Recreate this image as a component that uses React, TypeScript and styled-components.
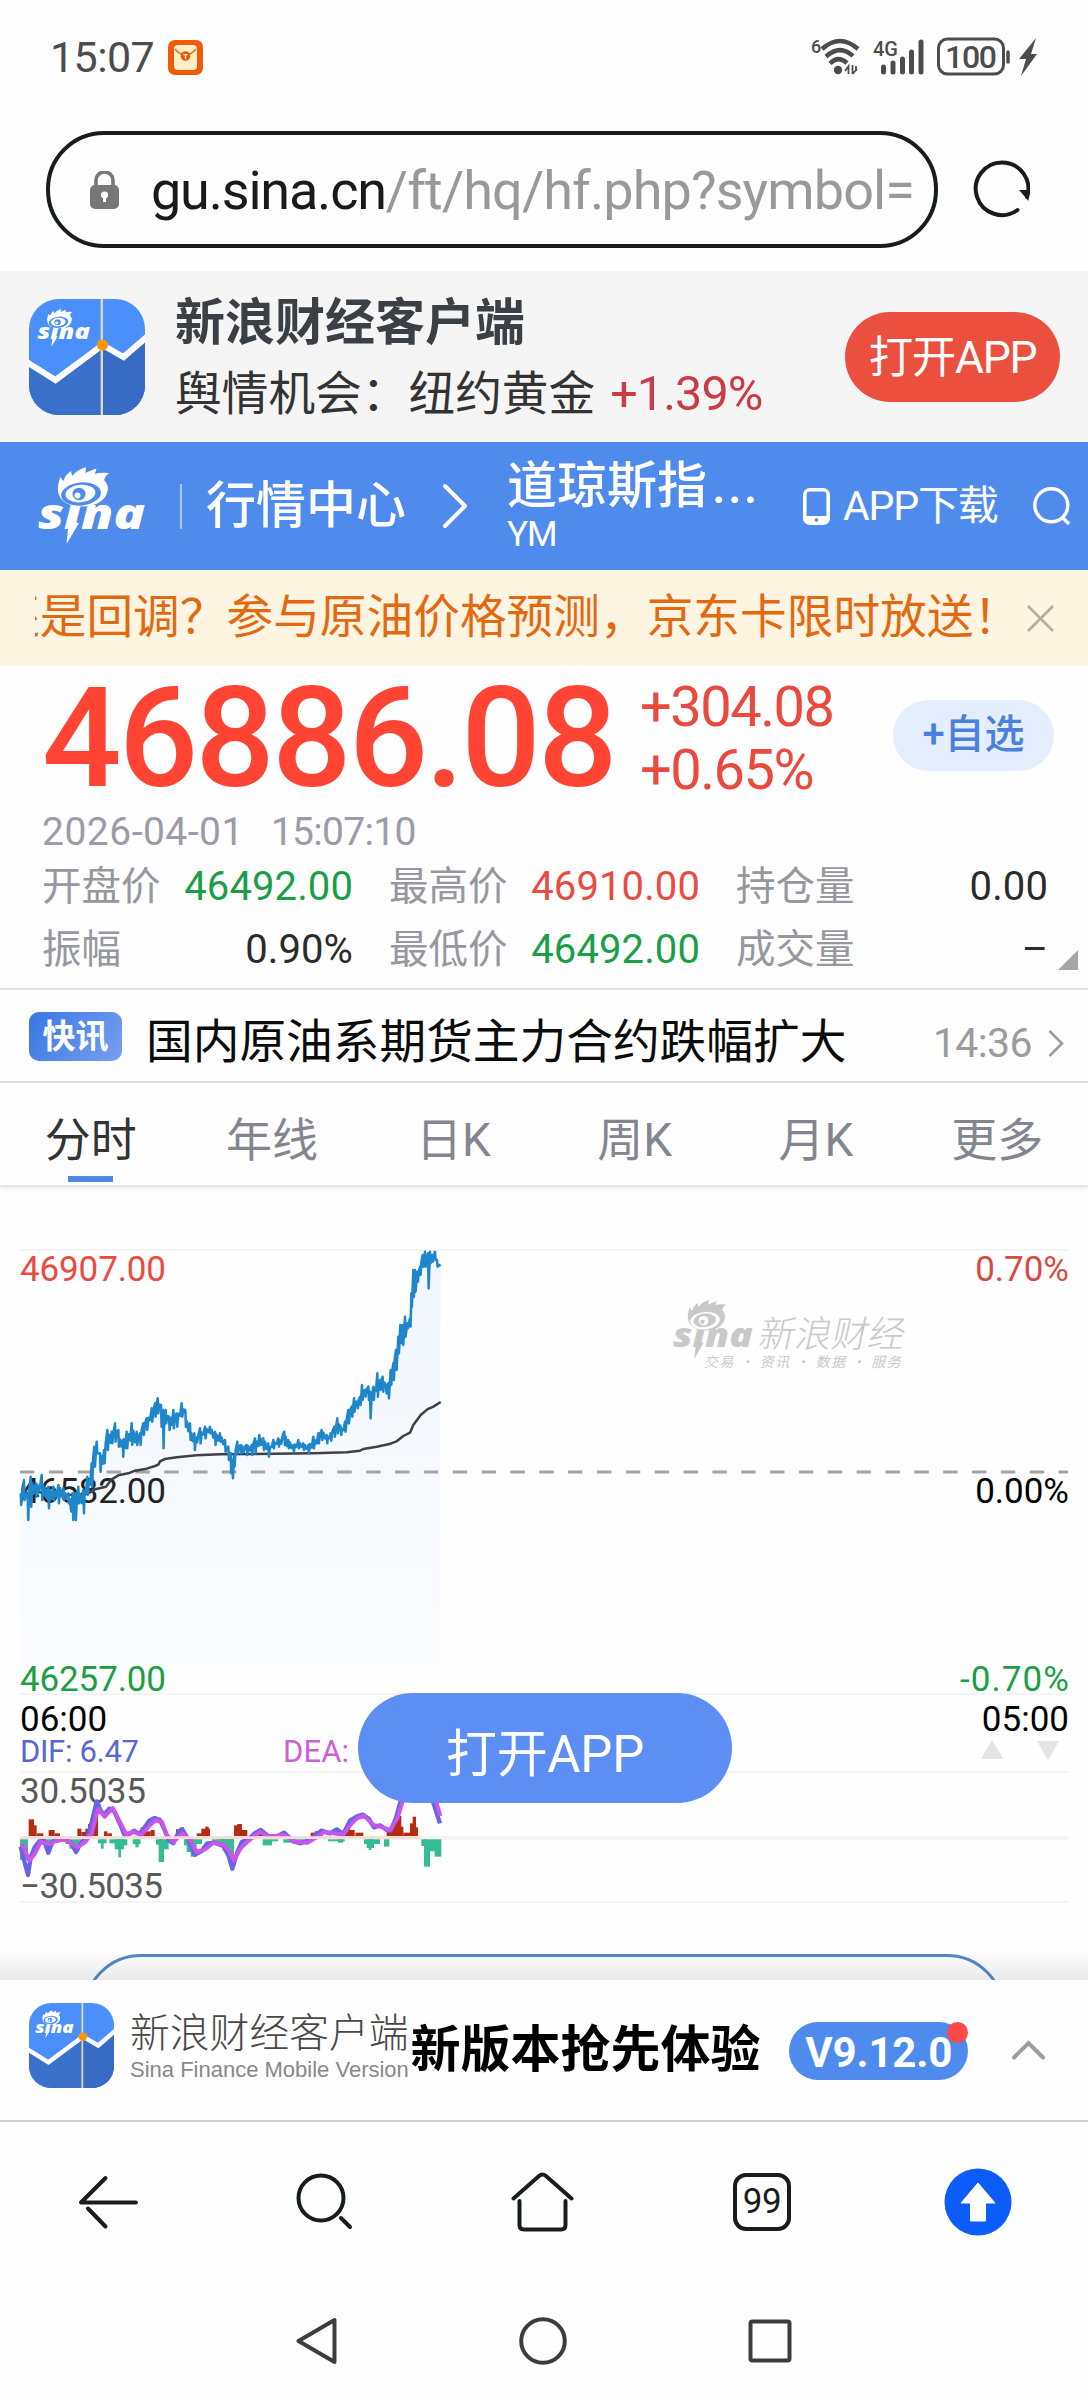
import React from "react";
import styled, { createGlobalStyle } from "styled-components";

const FONT = `Roboto, "Noto Sans CJK SC", sans-serif`;
const RED = "#e94b40";
const GREEN = "#1a9f46";

const GlobalStyle = createGlobalStyle`
  *, *::before, *::after { box-sizing: border-box; }
  body { margin: 0; background: #fefefe; font-family: ${FONT}; line-height: 1; }
  svg { display: block; flex: none; }
`;

const Screen = styled.div`
  width: 1088px;
  height: 2400px;
  display: flex;
  flex-direction: column;
  overflow: hidden;
  background: #fefefe;
  white-space: nowrap;
`;

/* ---------- status bar ---------- */
const StatusBar = styled.header`
  height: 131px;
  padding: 33px 50px 0 50px;
  display: flex;
  justify-content: space-between;
  align-items: flex-start;
  color: #4c4c4c;
`;
const StatusGroup = styled.div<{ $gap: number }>`
  display: flex;
  align-items: center;
  height: 48px;
  gap: ${(p) => p.$gap}px;
`;
const Clock = styled.span`
  font-size: 43px;
  letter-spacing: -0.6px;
`;

/* ---------- address bar ---------- */
const AddressRow = styled.div`
  height: 140px;
  padding: 0 58px 0 46px;
  display: flex;
  align-items: flex-start;
  justify-content: space-between;
`;
const AddressField = styled.div`
  width: 892px;
  height: 117px;
  border: 4px solid #1a1c1c;
  border-radius: 58px;
  padding: 0 18px 0 40px;
  display: flex;
  align-items: center;
`;
const Url = styled.div`
  flex: 1;
  margin-left: 32px;
  padding-top: 2px;
  font-size: 54px;
  line-height: 70px;
  letter-spacing: -0.9px;
  overflow: hidden;
  color: #999;
`;
const Host = styled.span`
  color: #1a1a1a;
  letter-spacing: -1.2px;
`;
const ReloadBox = styled.div`
  height: 117px;
  display: flex;
  align-items: center;
`;

/* ---------- promo banner ---------- */
const Promo = styled.section`
  height: 171px;
  background: #f5f5f5;
  padding: 0 28px 0 29px;
  display: flex;
  align-items: center;
`;
const PromoText = styled.div`
  flex: 1;
  margin-left: 30px;
  padding-top: 4px;
  display: flex;
  flex-direction: column;
  gap: 22px;
`;
const PromoTitle = styled.h1`
  margin: 0;
  font-size: 50px;
  font-weight: 700;
  color: #3b4046;
`;
const PromoLine = styled.div`
  font-size: 46.7px;
  color: #333;
`;
const PromoGain = styled.span`
  margin-left: 15px;
  font-size: 48.5px;
  letter-spacing: -0.9px;
  color: #cc3b45;
`;
const PromoButton = styled.button`
  width: 215px;
  height: 90px;
  border: 0;
  padding: 0 0 7px;
  border-radius: 45px;
  background: #eb4f3d;
  color: #fff;
  font: 400 44.5px ${FONT};
  letter-spacing: -1.3px;
`;

/* ---------- site header ---------- */
const SiteHeader = styled.nav`
  height: 128px;
  background: #4f8bed;
  color: #fff;
  padding: 0 16px 0 38px;
  display: flex;
  align-items: center;
`;
const HeaderDivider = styled.i`
  width: 2px;
  height: 45px;
  margin: 0 24px 0 34px;
  background: #a9c6f7;
`;
const HeaderSection = styled.span`
  font-size: 50px;
  font-weight: 500;
  margin-right: 36px;
`;
const HeaderTitle = styled.div`
  width: 296px;
  margin-left: 39px;
  display: flex;
  flex-direction: column;
  gap: 6px;
`;
const IndexName = styled.strong`
  font-size: 50px;
  font-weight: 500;
`;
const Dots = styled.span`
  letter-spacing: 2px;
  margin-left: 5px;
`;
const Symbol = styled.span`
  font-size: 35px;
  letter-spacing: -1px;
`;
const Download = styled.span`
  font-size: 41px;
  margin: 0 36px 0 13px;
  letter-spacing: -1.2px;
`;

/* ---------- scrolling notice ---------- */
const Notice = styled.section`
  height: 96px;
  background: #fef4e2;
  padding: 0 34px 0 35px;
  display: flex;
  align-items: center;
  justify-content: space-between;
`;
const NoticeText = styled.div`
  width: 962px;
  overflow: hidden;
  text-indent: -42px;
  font-size: 46.7px;
  line-height: 64px;
  padding-bottom: 2px;
  color: #e2690f;
`;

/* ---------- quote ---------- */
const Quote = styled.section`
  height: 324px;
  padding: 0 34px 0 42px;
  border-bottom: 2px solid #e2e2e2;
`;
const PriceRow = styled.div`
  height: 142px;
  padding-top: 2px;
  display: flex;
  align-items: center;
`;
const Price = styled.div`
  width: 598px;
  font-size: 140px;
  font-weight: 500;
  letter-spacing: -2.9px;
  color: #ff4433;
`;
const Change = styled.div`
  width: 253px;
  display: flex;
  flex-direction: column;
  gap: 7px;
  font-size: 56px;
  letter-spacing: -1.5px;
  color: #ea4a3e;
`;
const AddButton = styled.button`
  width: 161px;
  height: 71px;
  margin-bottom: 5px;
  border: 0;
  padding: 0 0 9px;
  border-radius: 36px;
  background: #e5eefc;
  color: #4b80dc;
  font: 500 40px ${FONT};
`;
const Stamp = styled.div`
  display: flex;
  gap: 27px;
  height: 44px;
  margin-top: 2px;
  font-size: 39px;
  line-height: 44px;
  color: #9b9ca6;
`;
const StampPart = styled.span<{ $spacing: number }>`
  letter-spacing: ${(p) => p.$spacing}px;
`;
const Stats = styled.dl`
  margin: 0;
  display: grid;
  grid-template-columns: 311px 311px 312px;
  grid-auto-rows: 63px;
  column-gap: 36px;
`;
const Stat = styled.div`
  display: flex;
  align-items: center;
  justify-content: space-between;
`;
const StatName = styled.dt`
  font-size: 39.5px;
  color: #96979f;
`;
const StatValue = styled.dd<{ $tone?: string }>`
  margin: 0;
  font-size: 40px;
  letter-spacing: 0.1px;
  color: ${(p) => p.$tone ?? "#2b2b2b"};
`;
const StatsWrap = styled.div`
  position: relative;
  width: 1006px;
  margin-top: 1px;
`;
const ExpandMark = styled.svg`
  position: absolute;
  right: -30px;
  bottom: 11px;
`;

/* ---------- news ---------- */
const News = styled.section`
  height: 93px;
  border-bottom: 2px solid #e2e2e2;
  padding: 10px 24px 0 29px;
  display: flex;
  align-items: center;
`;
const NewsBadge = styled.span`
  width: 93px;
  height: 49px;
  margin-bottom: 9px;
  border-radius: 10px;
  background: linear-gradient(125deg, #3877e3, #7a9ff0);
  color: #fff;
  font-size: 33px;
  font-weight: 700;
  display: flex;
  align-items: center;
  justify-content: center;
`;
const NewsTitle = styled.span`
  flex: 1;
  margin-left: 24px;
  padding-top: 4px;
  font-size: 46.7px;
  color: #0b0b0b;
`;
const NewsTime = styled.time`
  margin-right: 16px;
  padding-top: 6px;
  font-size: 41px;
  letter-spacing: -0.6px;
  color: #9c9c9c;
`;
const NewsArrow = styled.svg`
  margin-top: 6px;
`;

/* ---------- tabs ---------- */
const Tabs = styled.div`
  height: 104px;
  display: grid;
  grid-template-columns: repeat(6, 1fr);
  border-bottom: 2px solid #e6e6e6;
  box-shadow: 0 1px 4px rgba(0, 0, 0, 0.1);
`;
const Tab = styled.div<{ $active?: boolean }>`
  display: flex;
  flex-direction: column;
  align-items: center;
  padding-top: 34px;
  font-size: 46px;
  color: ${(p) => (p.$active ? "#333" : "#84868f")};
  &::after {
    content: "";
    width: 45px;
    height: 6px;
    margin-top: 13px;
    background: ${(p) => (p.$active ? "#4f87e4" : "transparent")};
  }
`;

/* ---------- chart ---------- */
const ChartArea = styled.main`
  position: relative;
  height: 793px;
  overflow: hidden;
  display: flex;
  flex-direction: column;
`;
const Plot = styled.svg`
  font-family: ${FONT};
  font-size: 35px;
`;
const OpenApp = styled.button`
  position: absolute;
  left: 358px;
  top: 506px;
  width: 374px;
  height: 110px;
  border: 0;
  padding: 4px 0 0;
  border-radius: 55px;
  background: #5c8ef3;
  color: #fff;
  font: 400 51px ${FONT};
  letter-spacing: -0.3px;
`;
const MorePill = styled.div`
  flex: none;
  width: 922px;
  height: 116px;
  margin: 0 auto;
  border: 3px solid #5689c9;
  border-radius: 58px;
`;
const FootShade = styled.div`
  position: absolute;
  left: 0;
  right: 0;
  bottom: 0;
  height: 32px;
  background: linear-gradient(rgba(0, 0, 0, 0), rgba(0, 0, 0, 0.08));
`;

/* ---------- app promo footer ---------- */
const Footer = styled.footer`
  height: 142px;
  background: #fefefe;
  border-bottom: 2px solid #ccd1d1;
  padding: 0 43px 10px 29px;
  display: flex;
  align-items: center;
`;
const FooterBrand = styled.div`
  width: 281px;
  margin-left: 16px;
  display: flex;
  flex-direction: column;
  gap: 7px;
`;
const BrandName = styled.span`
  font-family: "Noto Sans CJK SC", sans-serif;
  font-size: 39.8px;
  line-height: 42px;
  font-weight: 300;
  color: #484848;
`;
const BrandSub = styled.span`
  font: 400 22px/24px "Liberation Sans", sans-serif;
  letter-spacing: 0;
  color: #888;
`;
const FooterLead = styled.strong`
  font-size: 50px;
  font-weight: 700;
  color: #000;
  padding-top: 10px;
`;
const Version = styled.span`
  position: relative;
  width: 179px;
  height: 58px;
  margin: 11px 44px 0 29px;
  border-radius: 29px;
  background: #4f8bed;
  color: #fff;
  font-size: 42px;
  font-weight: 700;
  letter-spacing: -0.2px;
  display: flex;
  align-items: center;
  justify-content: center;
  padding-top: 4px;
  &::after {
    content: "";
    position: absolute;
    right: 0;
    top: 0;
    width: 21px;
    height: 21px;
    border-radius: 50%;
    background: #ff4848;
  }
`;
const Caret = styled.svg`
  margin-top: 10px;
`;

/* ---------- browser and system bars ---------- */
const BrowserBar = styled.nav`
  height: 160px;
  padding: 0 76px 0 78px;
  display: flex;
  align-items: center;
  justify-content: space-between;
`;
const TabCount = styled.span`
  width: 58px;
  height: 58px;
  margin: 0 -3px 0 3px;
  border: 4px solid #1a1c1c;
  border-radius: 13px;
  font-size: 35px;
  color: #1a1c1c;
  letter-spacing: -0.5px;
  display: flex;
  align-items: center;
  justify-content: center;
  padding-bottom: 2px;
`;
const SystemBar = styled.nav`
  height: 118px;
  padding: 0 296px;
  display: flex;
  align-items: center;
  justify-content: space-between;
`;

/* ---------- logo drawings ---------- */
function SinaMark({ ink, hole }: { ink: string; hole: string }) {
  return (
    <g>
      <text
        x="0"
        y="62"
        fill={ink}
        fontFamily='"Open Sans", sans-serif'
        fontSize="43"
        fontWeight="800"
        fontStyle="italic"
        textLength="107"
        lengthAdjust="spacingAndGlyphs"
      >
        sina
      </text>
      <path d="M31 54 L28.500 77 L41 56 Z" fill={ink} />
      <path
        d="M21.500 29 C18 21 21 16 22 10 L25.500 14 Q27 8 33 4 L34 9 Q39 3 48 0 L47.500 6 Q53 3 58.500 1.500 L57 7 Q62 5 71 6 Q67 9 66 13 Q72 19 69 26 C66 35 56 39.500 44 39.500 C34 39.500 24 36 21.500 29 Z"
        fill={ink}
      />
      <ellipse cx="43" cy="27" rx="20" ry="11.500" fill={hole} transform="rotate(-6 43 27)" />
      <ellipse cx="42.500" cy="26.500" rx="15" ry="8.800" fill={ink} transform="rotate(-6 43 27)" />
      <ellipse cx="41" cy="27" rx="6.500" ry="6.200" fill={hole} />
      <circle cx="39.500" cy="28.500" r="3" fill={ink} />
    </g>
  );
}

function AppIcon({ size, id }: { size: number; id: string }) {
  return (
    <svg width={size} height={size} viewBox="0 0 116 116">
      <defs>
        <clipPath id={id}>
          <rect width="116" height="116" rx="30" />
        </clipPath>
      </defs>
      <g clipPath={`url(#${id})`}>
        <rect width="116" height="116" fill="#4b8ffb" />
        <path d="M0 64 L26.5 81 L73.5 45 L94 58 L116 38 V116 H0Z" fill="#3a70c9" />
        <path d="M74 45 L94 58 L116 38 V116 H74Z" fill="#376bc6" />
        <path d="M-4 62 L26.5 81 L73.5 46 L94.5 58 L120 36" fill="none" stroke="#fff" strokeWidth="6" />
        <path d="M72.8 0 V116" stroke="#ddd9b4" strokeWidth="2.4" />
        <circle cx="73.5" cy="46" r="5.6" fill="#ff9500" />
        <g transform="translate(8.5 10) scale(.49)">
          <SinaMark ink="#fff" hole="#4b8ffb" />
        </g>
      </g>
    </svg>
  );
}

/* ---------- chart data ---------- */
// Each entry is x, upper bound, lower bound of the price within that moment.
const RANGE = `62 880 915;72 840 900;83 880 960;92 830 920;108 850 890;125 825 900;145 860 925;160 860 900;175 855 910;190 865 900;205 880 910;218 880 960;226 880 960;235 860 910;250 870 940;262 830 885;275 790 860;283 740 800;290 725 760;300 760 815;312 750 790;322 690 750;335 695 730;345 670 725;355 690 740;368 720 770;380 695 745;395 670 735;410 695 735;420 700 735;430 670 705;440 655 690;455 625 665;465 610 650;473 595 640;483 615 680;489 630 745;497 630 670;507 650 690;520 630 685;530 640 680;545 610 650;556 630 680;570 670 720;583 700 750;600 685 730;615 680 715;630 680 700;645 695 735;660 700 725;675 720 755;685 740 780;692 760 820;697 780 835;702 765 800;712 725 760;722 735 760;740 735 765;755 735 765;765 715 760;778 705 735;790 715 750;805 730 770;820 720 745;835 715 740;853 695 735;865 720 745;880 735 755;895 720 745;910 730 750;925 735 760;940 710 745;955 700 730;965 690 720;980 705 730;992 700 722;1003 680 710;1012 655 700;1022 680 705;1035 665 695;1045 630 670;1055 620 650;1062 595 635;1072 605 625;1080 590 615;1086 555 600;1095 570 590;1105 560 600;1110 575 655;1120 560 600;1132 520 590;1140 540 570;1148 530 575;1158 555 580;1165 550 595;1172 510 555;1180 490 540;1188 450 510;1195 410 460;1201 375 430;1208 375 435;1215 350 410;1222 370 385;1230 355 380;1234 280 320;1240 210 290;1245 210 275;1252 215 245;1260 200 225;1268 165 200;1275 155 200;1284 160 265;1290 155 190;1297 165 185;1305 155 180;1311 180 200;1322 195 205`
  .split(";")
  .map((s) => s.split(" ").map(Number));

function pricePoints(): string {
  const out: string[] = [];
  let seed = 7;
  const rnd = () => {
    seed = (seed * 16807) % 2147483647;
    return seed / 2147483647;
  };
  for (let i = 0; i < RANGE.length - 1; i++) {
    const [x0, h0, l0] = RANGE[i];
    const [x1, h1, l1] = RANGE[i + 1];
    out.push(`${x0},${h0}`, `${x0 + 1.8},${l0}`);
    const n = Math.floor((x1 - x0) / 4);
    for (let k = 1; k < n; k++) {
      const t = k / n;
      const hi = h0 + (h1 - h0) * t;
      const lo = l0 + (l1 - l0) * t;
      const y = k % 2 ? hi + (lo - hi) * (0.1 + 0.35 * rnd()) : lo - (lo - hi) * (0.1 + 0.35 * rnd());
      out.push(`${(x0 + (x1 - x0) * t).toFixed(1)},${y.toFixed(1)}`);
    }
  }
  out.push("1322,198");
  return out.join(" ");
}
const PRICE = pricePoints();

const AVERAGE =
  "62,910 75,880 100,875 150,880 200,885 262,882 285,868 318,860 335,838 355,826 385,820 405,812 440,806 465,798 475,794 480,784 495,777 530,772 590,766 660,763 760,762 940,760 1040,757 1080,752 1090,747 1130,740 1165,733 1190,724 1210,708 1230,698 1240,675 1262,645 1282,628 1300,620 1322,606";

// MACD histogram: x, width, signed height.
const BARS: number[][] = [
  [60, 24, -62], [86, 16, 50], [102, 8, 32], [110, 20, 8], [132, 22, -26], [146, 18, 18], [164, 16, 8],
  [196, 14, -14], [208, 14, -28], [222, 16, -36], [238, 10, -14], [232, 12, 22], [244, 14, 12], [256, 10, 22], [264, 8, 36], [272, 8, 54], [280, 14, 76],
  [294, 26, -12], [303, 8, -28], [312, 10, 14], [322, 14, 8], [328, 40, -12], [344, 28, -30], [355, 8, -54], [364, 18, -18],
  [398, 24, -14], [406, 10, -24], [422, 16, 26], [438, 14, 14], [452, 12, 18], [468, 24, -16], [476, 16, -68], [492, 14, -30], [506, 20, -12],
  [528, 12, 20], [540, 12, 26], [552, 14, -18], [560, 24, -38], [572, 18, -52], [588, 18, -14], [590, 16, 8], [604, 26, 22], [616, 10, 28],
  [636, 66, -12], [652, 46, -20], [668, 30, -34], [684, 18, -66], [702, 14, 32], [712, 14, 36], [724, 18, 18], [762, 22, 14], [780, 12, 8],
  [788, 28, -18], [816, 18, -6], [850, 40, -10], [882, 52, -8], [932, 12, 10], [944, 24, 14], [984, 50, -6], [1014, 16, -10],
  [1030, 34, 18], [1040, 10, 22], [1066, 24, 10], [1092, 48, -14], [1100, 22, -26], [1106, 8, -32], [1152, 16, -22],
  [1160, 20, 14], [1174, 16, 36], [1184, 18, 54], [1194, 10, 60], [1202, 8, 28], [1210, 20, 10], [1230, 10, 38], [1238, 10, 58], [1246, 8, 26],
  [1264, 16, -20], [1272, 18, -82], [1290, 16, -36], [1304, 20, -52],
];
const DIF =
  "62,590 72,630 84,675 92,622 104,592 118,574 130,566 145,608 158,574 176,568 196,568 214,580 228,606 242,580 262,562 276,514 290,454 302,482 312,494 328,476 344,486 360,522 374,556 388,552 402,542 418,552 434,532 448,512 464,504 480,510 494,540 506,570 520,580 538,542 548,540 566,570 584,614 604,604 622,580 644,578 670,588 686,618 697,656 712,606 726,576 748,566 764,550 782,540 804,558 830,560 852,548 880,574 902,580 930,570 948,554 964,542 990,550 1010,538 1030,552 1050,512 1070,500 1088,494 1106,506 1122,532 1140,526 1160,540 1172,542 1188,504 1200,460 1220,400 1286,420 1302,464 1320,520";
const DEA =
  "66,580 88,632 104,612 122,576 150,582 166,574 196,568 232,592 256,576 276,548 294,476 314,500 338,474 356,508 378,552 402,546 422,556 446,530 466,510 486,516 498,552 520,576 546,550 570,570 590,606 616,598 640,578 672,584 690,606 702,632 722,594 746,572 780,546 810,560 852,554 884,576 922,578 950,562 972,546 1000,550 1030,554 1052,524 1072,504 1094,498 1118,524 1148,532 1170,540 1192,506 1206,460 1226,404 1290,420 1308,454 1321,498";

function Chart() {
  const grid = [1250, 1694, 1772, 1902];
  return (
    <Plot width="1088" height="767" viewBox="0 1187 1088 767">
      <defs>
        <linearGradient id="fill" x1="0" y1="0" x2="0" y2="1">
          <stop offset="0" stopColor="#f1f7fe" />
          <stop offset="0.7" stopColor="#f7fafe" />
          <stop offset="1" stopColor="#fafcff" />
        </linearGradient>
      </defs>
      <g transform="translate(0 1200) scale(.33333)">
        <polygon points={`62,1396 ${PRICE} 1318,1396`} fill="url(#fill)" />
      </g>
      {grid.map((y) => (
        <line key={y} x1="20" x2="1068" y1={y} y2={y} stroke="#f4f4f4" strokeWidth="2" />
      ))}
      <line x1="20" x2="1068" y1="1838" y2="1838" stroke="#f4f4f4" strokeWidth="4" />
      <line x1="20" x2="1068" y1="1472" y2="1472" stroke="#a3a3a3" strokeWidth="2.8" strokeDasharray="14.4 14.45" />

      <g fill="#c9c9c9">
        <g transform="translate(673 1300) scale(.745 .765)">
          <SinaMark ink="#c9c9c9" hole="#fefefe" />
        </g>
        <text transform="translate(757 1347) skewX(-12)" fontFamily='"Noto Sans CJK SC"' fontWeight="300" fontSize="36.500">新浪财经</text>
        <text transform="translate(704 1367) skewX(-12)" fontFamily='"Noto Sans CJK SC"' fontSize="14" textLength="197">交易 · 资讯 · 数据 · 服务</text>
      </g>

      <text x="20" y="1281" fill={RED} textLength="146">46907.00</text>
      <text x="1069" y="1281" fill="#d84a44" textAnchor="end">0.70%</text>
      <text x="20" y="1503" fill="#222" textLength="146">46582.00</text>
      <text x="1069" y="1503" fill="#000" textAnchor="end">0.00%</text>
      <text x="20" y="1691" fill={GREEN} textLength="146">46257.00</text>
      <text x="1069" y="1691" fill={GREEN} textAnchor="end" textLength="109">-0.70%</text>
      <text x="20" y="1731" fill="#000">06:00</text>
      <text x="1069" y="1731" fill="#000" textAnchor="end">05:00</text>
      <text x="20" y="1762" fill="#5868d2" fontSize="31" textLength="119">DIF: 6.47</text>
      <text x="283" y="1762" fill="#cf5fd6" fontSize="31" textLength="66">DEA:</text>
      <path d="M992 1740 L1003.5 1759 H981Z M1037 1741 H1059 L1048 1760Z" fill="#e4e4e4" />
      <text x="20" y="1803" fill="#595959" textLength="126">30.5035</text>
      <text x="20" y="1898" fill="#595959" textLength="143">−30.5035</text>

      <g transform="translate(0 1200) scale(.33333)" fill="none" strokeLinejoin="round">
        <polyline points={AVERAGE} stroke="#3e4045" strokeWidth="7.500" />
        <polyline points={PRICE} stroke="#1f86ca" strokeWidth="7.500" />
      </g>
      <g transform="translate(0 1650) scale(.33333)">
        {BARS.map(([x, w, h], i) => (
          <rect key={i} x={x} width={w} y={h > 0 ? 558 - h : 568} height={Math.abs(h)} fill={h > 0 ? "#b52c12" : "#34bd94"} />
        ))}
        <g fill="none" strokeLinejoin="round">
          <polyline points={DIF} stroke="#6464e8" strokeWidth="13" />
          <polyline points={DEA} stroke="#cb55ea" strokeWidth="12" />
        </g>
        <line x1="62" x2="1262" y1="563" y2="563" stroke="#f6dcd2" strokeWidth="8" />
      </g>
    </Plot>
  );
}

const STATS: { name: string; value: string; tone?: string }[] = [
  { name: "开盘价", value: "46492.00", tone: GREEN },
  { name: "最高价", value: "46910.00", tone: RED },
  { name: "持仓量", value: "0.00" },
  { name: "振幅", value: "0.90%" },
  { name: "最低价", value: "46492.00", tone: GREEN },
  { name: "成交量", value: "–" },
];

export default function App() {
  return (
    <>
      <GlobalStyle />
      <Screen>
        <StatusBar>
          <StatusGroup $gap={14}>
            <Clock>15:07</Clock>
            <svg width="35" height="35" viewBox="0 0 35 35">
              <rect width="35" height="35" rx="7" fill="#f05a0c" />
              <rect x="6" y="5" width="23" height="25" rx="4" fill="#ffefc4" />
              <path d="M7 9 Q12 15 17.500 15 Q23 15 28 9" fill="none" stroke="#e6792c" strokeWidth="1.8" />
              <circle cx="17.5" cy="16" r="4.8" fill="#e8590e" />
              <path d="M15.4 14.6 H19.6 M17.5 14.6 V18.8" stroke="#ffefc4" strokeWidth="1.4" />
            </svg>
          </StatusGroup>
          <StatusGroup $gap={13}>
            <svg width="50" height="38" viewBox="0 0 50 38">
              <text x="1" y="15" fontFamily="Roboto" fontWeight="500" fontSize="18" fill="#4c4c4c">6</text>
              <g fill="none" stroke="#4c4c4c" strokeWidth="4.400">
                <path d="M12 11 Q30 -5 48 11" />
                <path d="M16 18.500 Q30 6 43 18" />
                <path d="M20 25.500 Q28 17 37 25" />
              </g>
              <circle cx="28" cy="32" r="4.2" fill="#4c4c4c" />
              <path d="M38.500 36 V28 L35 33 M42.500 27 V36 M42.500 36 L47 31 M46 28 V33" stroke="#4c4c4c" strokeWidth="1.8" fill="none" />
            </svg>
            <svg width="51" height="38" viewBox="0 0 51 38">
              <text x="0" y="18" fontFamily="Roboto" fontWeight="500" fontSize="21" textLength="25" lengthAdjust="spacingAndGlyphs" fill="#4c4c4c">4G</text>
              <g stroke="#4c4c4c" strokeWidth="5" strokeLinecap="round">
                <path d="M10.500 29 V34 M20 25 V34 M29.500 21 V34 M38.500 14 V34 M48 4 V34" />
              </g>
            </svg>
            <svg width="101" height="40" viewBox="0 0 101 40">
              <rect x="1.500" y="2" width="65" height="35" rx="9" fill="none" stroke="#4c4c4c" strokeWidth="3" />
              <text x="34" y="31" fontFamily="Roboto" fontWeight="500" fontSize="32" textAnchor="middle" textLength="52" fill="#4c4c4c">100</text>
              <path d="M71 15 V25" stroke="#4c4c4c" strokeWidth="3.500" strokeLinecap="round" />
              <path d="M99 1 L82 22 H89 L84 39 L100 17 H94Z" fill="#4c4c4c" />
            </svg>
          </StatusGroup>
        </StatusBar>

        <AddressRow>
          <AddressField>
            <svg width="29" height="38" viewBox="0 0 29 38">
              <path d="M6 16 V9 a8.500 8 0 0 1 17 0 V16" fill="none" stroke="#777" strokeWidth="3.600" />
              <rect y="14" width="29" height="24" rx="5" fill="#777" />
              <circle cx="14.500" cy="24" r="3.600" fill="#fefefe" />
              <rect x="13" y="24" width="3" height="7" fill="#fefefe" />
            </svg>
            <Url>
              <Host>gu.sina.cn</Host>/ft/hq/hf.php?symbol=
            </Url>
          </AddressField>
          <ReloadBox>
            <svg width="58" height="60" viewBox="0 0 58 60">
              <path d="M45.500 50 A26.300 26.300 0 1 1 55 37" fill="none" stroke="#1a1c1c" strokeWidth="4" strokeLinecap="round" />
              <path d="M47 30 L57.500 30 L56.500 41Z" fill="#1a1c1c" />
            </svg>
          </ReloadBox>
        </AddressRow>

        <Promo>
          <AppIcon size={116} id="clip-top" />
          <PromoText>
            <PromoTitle>新浪财经客户端</PromoTitle>
            <PromoLine>
              舆情机会：纽约黄金<PromoGain>+1.39%</PromoGain>
            </PromoLine>
          </PromoText>
          <PromoButton>打开APP</PromoButton>
        </Promo>

        <SiteHeader>
          <svg width="108" height="78" viewBox="0 0 108 78">
            <SinaMark ink="#fff" hole="#4f8bed" />
          </svg>
          <HeaderDivider />
          <HeaderSection>行情中心</HeaderSection>
          <svg width="26" height="46" viewBox="0 0 26 46">
            <path d="M3 3 L23 23 L3 43" fill="none" stroke="#fff" strokeWidth="4" strokeLinecap="round" strokeLinejoin="round" />
          </svg>
          <HeaderTitle>
            <IndexName>
              道琼斯指<Dots>...</Dots>
            </IndexName>
            <Symbol>YM</Symbol>
          </HeaderTitle>
          <svg width="27" height="37" viewBox="0 0 27 37">
            <rect x="1.800" y="1.800" width="23.400" height="33.400" rx="5" fill="none" stroke="#fff" strokeWidth="3.600" />
            <rect x="2" y="28" width="23" height="7" fill="#fff" />
            <circle cx="13.500" cy="32" r="1.800" fill="#4f8bed" />
          </svg>
          <Download>APP下载</Download>
          <svg width="38" height="38" viewBox="0 0 38 38">
            <circle cx="18.300" cy="18.300" r="16.500" fill="none" stroke="#fff" strokeWidth="3.400" />
            <path d="M29 30 L36 37" stroke="#fff" strokeWidth="3.400" />
          </svg>
        </SiteHeader>

        <Notice>
          <NoticeText>还是回调？参与原油价格预测，京东卡限时放送！</NoticeText>
          <svg width="27" height="27" viewBox="0 0 27 27">
            <path d="M1 1 L26 26 M26 1 L1 26" stroke="#b3aca0" strokeWidth="2.600" />
          </svg>
        </Notice>

        <Quote>
          <PriceRow>
            <Price>46886.08</Price>
            <Change>
              <span>+304.08</span>
              <span>+0.65%</span>
            </Change>
            <AddButton>+自选</AddButton>
          </PriceRow>
          <Stamp>
            <StampPart $spacing={0.5}>2026-04-01</StampPart>
            <StampPart $spacing={-0.7}>15:07:10</StampPart>
          </Stamp>
          <StatsWrap>
            <Stats>
              {STATS.map((s) => (
                <Stat key={s.name}>
                  <StatName>{s.name}</StatName>
                  <StatValue $tone={s.tone}>{s.value}</StatValue>
                </Stat>
              ))}
            </Stats>
            <ExpandMark width="20" height="20" viewBox="0 0 20 20">
              <path d="M20 0 V20 H0Z" fill="#a6a6a6" />
            </ExpandMark>
          </StatsWrap>
        </Quote>

        <News>
          <NewsBadge>快讯</NewsBadge>
          <NewsTitle>国内原油系期货主力合约跌幅扩大</NewsTitle>
          <NewsTime>14:36</NewsTime>
          <NewsArrow width="16" height="27" viewBox="0 0 16 27">
            <path d="M1.500 1 L14 13.500 L1.500 26" fill="none" stroke="#9c9c9c" strokeWidth="2.600" />
          </NewsArrow>
        </News>

        <Tabs>
          {["分时", "年线", "日K", "周K", "月K", "更多"].map((t, i) => (
            <Tab key={t} $active={i === 0}>
              {t}
            </Tab>
          ))}
        </Tabs>

        <ChartArea>
          <Chart />
          <MorePill />
          <FootShade />
          <OpenApp>打开APP</OpenApp>
        </ChartArea>

        <Footer>
          <AppIcon size={85} id="clip-foot" />
          <FooterBrand>
            <BrandName>新浪财经客户端</BrandName>
            <BrandSub>Sina Finance Mobile Version</BrandSub>
          </FooterBrand>
          <FooterLead>新版本抢先体验</FooterLead>
          <Version>V9.12.0</Version>
          <Caret width="33" height="20" viewBox="0 0 33 20">
            <path d="M2 17.500 L16.500 3 L31 17.500" fill="none" stroke="#9c9ca5" strokeWidth="4" strokeLinecap="round" />
          </Caret>
        </Footer>

        <BrowserBar>
          <svg width="60" height="60" viewBox="78 2172 60 60">
            <path d="M136 2202.500 H81 L105.500 2178 M88 2208.500 L105.500 2226.500" fill="none" stroke="#1a1c1c" strokeWidth="4" strokeLinecap="round" strokeLinejoin="round" />
          </svg>
          <svg width="60" height="60" viewBox="294 2172 60 60">
            <circle cx="321" cy="2198" r="22.500" fill="none" stroke="#1a1c1c" strokeWidth="4" />
            <path d="M341 2218 L350 2227" stroke="#1a1c1c" strokeWidth="4" strokeLinecap="round" />
          </svg>
          <svg width="64" height="60" viewBox="511 2172 64 60">
            <path d="M514.500 2198.500 L540 2176 Q543.500 2173 547 2176 L572.500 2198.500 M520.500 2201 V2225 Q520.500 2229.500 525 2229.500 H562 Q566.500 2229.500 566.500 2225 V2201" fill="none" stroke="#1a1c1c" strokeWidth="4" strokeLinecap="round" strokeLinejoin="round" />
          </svg>
          <TabCount>99</TabCount>
          <svg width="68" height="68" viewBox="0 0 68 68">
            <circle cx="34" cy="34" r="33.500" fill="#0b5cf8" />
            <path d="M34 15 L51 35 H41.500 V53 H26.500 V35 H17Z" fill="#fff" stroke="#fff" strokeWidth="1" strokeLinejoin="round" />
          </svg>
        </BrowserBar>

        <SystemBar>
          <svg width="42" height="50" viewBox="0 0 42 50">
            <path d="M2.500 25 L38.500 4 V46 Z" fill="none" stroke="#3c3c3c" strokeWidth="4" strokeLinejoin="round" />
          </svg>
          <svg width="48" height="48" viewBox="0 0 48 48">
            <circle cx="24" cy="24" r="21.800" fill="none" stroke="#3c3c3c" strokeWidth="4" />
          </svg>
          <svg width="44" height="44" viewBox="0 0 44 44">
            <rect x="2.500" y="2.500" width="39" height="39" rx="2" fill="none" stroke="#3c3c3c" strokeWidth="4" />
          </svg>
        </SystemBar>
      </Screen>
    </>
  );
}
